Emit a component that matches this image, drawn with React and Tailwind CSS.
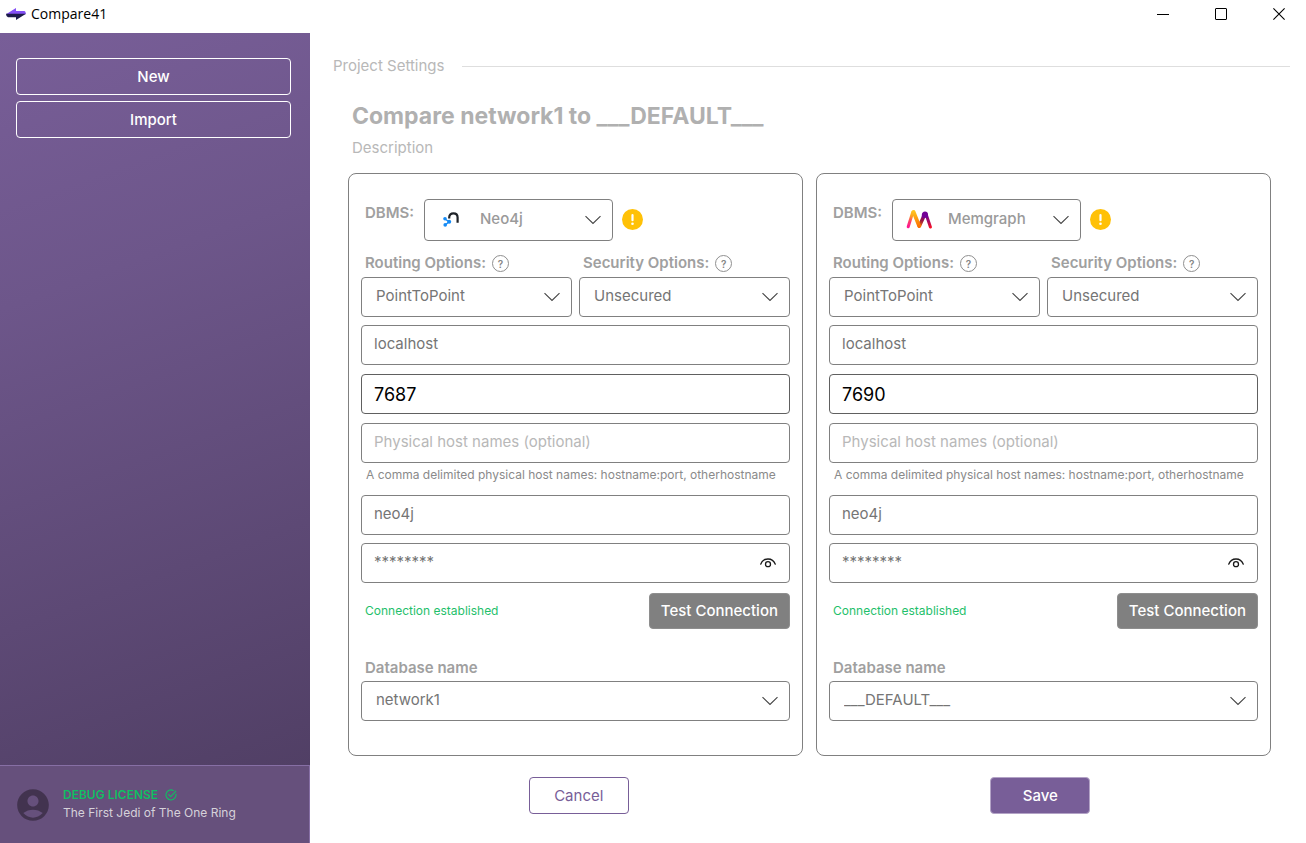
import React, { useState } from "react";
import { MdAccountCircle } from "react-icons/md";

const connections = [
  {
    id: "source",
    dbms: "Neo4j",
    Logo: Neo4jLogo,
    port: "7687",
    database: "network1",
  },
  {
    id: "target",
    dbms: "Memgraph",
    Logo: MemgraphLogo,
    port: "7690",
    database: "___DEFAULT___",
  },
];

function AppLogo() {
  return (
    <svg width="20" height="12" viewBox="0 0 20 12" aria-hidden="true">
      <path d="M0 6.2 L10 0 V3 H18.5 Q20 3.4 19.8 6.2 Z" fill="#8450f5" />
      <path d="M0 5.8 H20 L10 12 V9.2 H2 Q0 8.8 0 5.8 Z" fill="#1d1b4b" />
    </svg>
  );
}

function Neo4jLogo() {
  return (
    <svg width="16" height="15" viewBox="0 0 16 15" aria-hidden="true">
      <path
        d="M6.2 6.5 V5.6 C6.2 2.6 8 1.4 10.4 1.4 C12.9 1.4 14.6 2.8 14.6 5.6 V10.8"
        fill="none"
        stroke="#1f2328"
        strokeWidth="2.2"
      />
      <path
        d="M2 7 L6 9.8 L2.6 12.8"
        fill="none"
        stroke="#168bf5"
        strokeWidth="1.4"
      />
      <circle cx="2" cy="6.8" r="1.8" fill="#168bf5" />
      <circle cx="6.2" cy="9.8" r="2" fill="#168bf5" />
      <circle cx="2.2" cy="12.9" r="1.8" fill="#168bf5" />
    </svg>
  );
}

function MemgraphLogo() {
  return (
    <svg width="26" height="20" viewBox="0 0 26 20" aria-hidden="true">
      <defs>
        <linearGradient id="mg-left" gradientUnits="userSpaceOnUse" x1="2" y1="18" x2="7" y2="2">
          <stop offset="0" stopColor="#ff1493" />
          <stop offset="0.35" stopColor="#fb3e6a" />
          <stop offset="0.7" stopColor="#ffa51e" />
          <stop offset="1" stopColor="#ffc71e" />
        </linearGradient>
        <linearGradient id="mg-mid" gradientUnits="userSpaceOnUse" x1="8" y1="2" x2="13" y2="18">
          <stop offset="0" stopColor="#ffc71e" />
          <stop offset="1" stopColor="#fb6e00" />
        </linearGradient>
        <linearGradient id="mg-rise" gradientUnits="userSpaceOnUse" x1="18" y1="5" x2="13" y2="18">
          <stop offset="0" stopColor="#720096" />
          <stop offset="0.5" stopColor="#9a1640" />
          <stop offset="1" stopColor="#fb6e00" />
        </linearGradient>
        <linearGradient id="mg-right" gradientUnits="userSpaceOnUse" x1="20" y1="4" x2="25" y2="19">
          <stop offset="0" stopColor="#720096" />
          <stop offset="0.5" stopColor="#9d0a6a" />
          <stop offset="1" stopColor="#ff1020" />
        </linearGradient>
      </defs>
      <g strokeLinecap="round" strokeLinejoin="round" fill="none">
        <path d="M20.2 5.6 L24.4 18" stroke="url(#mg-right)" strokeWidth="3" />
        <path d="M18.6 5.6 L13.4 17" stroke="url(#mg-rise)" strokeWidth="3.6" />
        <path d="M7.6 3 L13.2 17" stroke="url(#mg-mid)" strokeWidth="3.8" />
        <path d="M6.8 3 L2.2 17.8" stroke="url(#mg-left)" strokeWidth="3" />
      </g>
      <path
        d="M15.8 8.4 V6 C15.8 3.8 17.2 2.6 19 2.6 C20.8 2.6 22 3.8 22 5.6 V9 Z"
        fill="#720096"
      />
    </svg>
  );
}

function ChevronIcon() {
  return (
    <svg
      width="16"
      height="9"
      viewBox="0 0 16 9"
      className="pointer-events-none absolute right-3 top-1/2 -translate-y-1/2"
      aria-hidden="true"
    >
      <path
        d="M0.5 0.7 L8 8 L15.5 0.7"
        fill="none"
        stroke="#444444"
        strokeWidth="1.1"
      />
    </svg>
  );
}

function HelpIcon() {
  return (
    <span className="flex h-[17px] w-[17px] items-center justify-center rounded-full border border-[#8f8f8f] text-[10px] font-semibold leading-none text-[#858585]">
      ?
    </span>
  );
}

function WarningIcon() {
  return (
    <svg width="21" height="21" viewBox="0 0 21 21" aria-hidden="true">
      <circle cx="10.5" cy="10.5" r="10.5" fill="#ffc107" />
      <path d="M10.5 6 V11.2" stroke="#ffffff" strokeWidth="2.2" strokeLinecap="round" />
      <circle cx="10.5" cy="14.8" r="1.3" fill="#ffffff" />
    </svg>
  );
}

function EyeIcon() {
  return (
    <svg width="16" height="10" viewBox="0 0 16 10" fill="none" aria-hidden="true">
      <path
        d="M0.7 6.2 C2 2.8 4.8 1 8 1 C11.2 1 14 2.8 15.3 6.2"
        stroke="#1a1a1a"
        strokeWidth="1.3"
        strokeLinecap="round"
      />
      <circle cx="8" cy="6.2" r="2.5" stroke="#1a1a1a" strokeWidth="1.3" />
    </svg>
  );
}

function CheckCircleIcon() {
  return (
    <svg width="12" height="12" viewBox="0 0 12 12" fill="none" aria-hidden="true">
      <path
        d="M10.9 5 A5 5 0 1 1 8.3 1.5"
        stroke="#0fbf62"
        strokeWidth="1.1"
        strokeLinecap="round"
      />
      <path
        d="M3.7 5.6 L5.7 7.7 L10.8 2.2"
        stroke="#0fbf62"
        strokeWidth="1.1"
        strokeLinecap="round"
        strokeLinejoin="round"
      />
    </svg>
  );
}

function TitleBar() {
  return (
    <header className="flex h-[33px] shrink-0 items-start bg-white">
      <div className="flex h-7 items-center gap-[5px] pl-[6px]">
        <AppLogo />
        <span className="font-['Open_Sans',sans-serif] text-[14px] leading-5 text-black">
          Compare41
        </span>
      </div>
      <div className="ml-auto flex gap-1">
        <button aria-label="Minimize" className="flex h-7 w-[54px] items-center justify-center">
          <span className="h-px w-3 bg-black" />
        </button>
        <button aria-label="Maximize" className="flex h-7 w-[54px] items-center justify-center">
          <span className="h-3 w-3 rounded-[1px] border border-black" />
        </button>
        <button aria-label="Close" className="flex h-7 w-[54px] items-center justify-center">
          <svg width="12" height="12" viewBox="0 0 12 12" aria-hidden="true">
            <path d="M0.4 0.4 L11.6 11.6 M11.6 0.4 L0.4 11.6" stroke="#000000" strokeWidth="1.1" />
          </svg>
        </button>
      </div>
    </header>
  );
}

function Sidebar() {
  return (
    <aside className="flex w-[310px] shrink-0 flex-col bg-[linear-gradient(160deg,#785e98_0%,#6d568a_30%,#4d3c60_100%)]">
      <nav className="flex flex-col gap-[6px] px-4 pt-[25px] pr-[19px]">
        <button className="h-[37px] rounded-[4px] border border-white pt-px text-[15px] font-medium text-white">
          New
        </button>
        <button className="h-[37px] rounded-[4px] border border-white pt-px text-[15px] font-medium text-white">
          Import
        </button>
      </nav>
      <div className="mt-auto flex h-[78px] items-center gap-[11px] border-t border-r border-[#876fa5] bg-[#66507c] pl-[14px]">
        <MdAccountCircle size={38} className="text-[#42334f]" />
        <div className="pb-[2px] text-[12px] leading-[18px]">
          <p className="flex items-center gap-[7px] font-semibold text-[#0fbf62]">
            DEBUG LICENSE <CheckCircleIcon />
          </p>
          <p className="text-[#d6d2da]">The First Jedi of The One Ring</p>
        </div>
      </div>
    </aside>
  );
}

function SelectField({ id, value, options }) {
  return (
    <div className="relative">
      <select
        id={id}
        defaultValue={value}
        className="block h-10 w-full appearance-none rounded-[4px] border border-[#808080] bg-white pb-[2px] pl-[14px] text-[15px] text-[#757575]"
      >
        {options.map((option) => (
          <option key={option}>{option}</option>
        ))}
      </select>
      <ChevronIcon />
    </div>
  );
}

function TextField({ className, ...props }) {
  return (
    <input
      type="text"
      className={`block h-10 w-full rounded-[4px] border bg-white px-3 placeholder:text-[#b8b8b8] ${className}`}
      {...props}
    />
  );
}

const fieldText = "border-[#808080] pb-1 text-[15px] text-[#757575]";

function ConnectionCard({ connection }) {
  const { id, dbms, Logo, port, database } = connection;

  return (
    <section className="rounded-[8px] border border-[#808080] bg-white px-3 pt-[25px] pb-[34px]">
      <div className="flex pl-1">
        <label
          htmlFor={`${id}-dbms`}
          className="w-[59px] pt-1 text-[15px] leading-5 font-semibold text-[#a0a0a0]"
        >
          DBMS:
        </label>
        <div className="relative w-[189px]">
          <select
            id={`${id}-dbms`}
            defaultValue={dbms}
            className="block h-[42px] w-full appearance-none rounded-[4px] border border-[#808080] bg-white pb-[2px] pl-[55px] text-[15px] font-medium text-[#9a9a9a]"
          >
            <option>Neo4j</option>
            <option>Memgraph</option>
          </select>
          <span className="pointer-events-none absolute top-0 left-[14px] flex h-10 w-[26px] items-center justify-center">
            <Logo />
          </span>
          <ChevronIcon />
        </div>
        <span className="ml-[9px] flex items-center pb-px">
          <WarningIcon />
        </span>
      </div>

      <div className="mt-3 grid grid-cols-2 gap-x-[7px]">
        <div>
          <div className="flex h-6 items-center gap-[6px] pb-[3px] pl-1">
            <label htmlFor={`${id}-routing`} className="text-[15px] font-semibold text-[#a0a0a0]">
              Routing Options:
            </label>
            <HelpIcon />
          </div>
          <SelectField
            id={`${id}-routing`}
            value="PointToPoint"
            options={["PointToPoint", "ClientSide", "ServerSide"]}
          />
        </div>
        <div>
          <div className="flex h-6 items-center gap-[6px] pb-[3px] pl-1">
            <label htmlFor={`${id}-security`} className="text-[15px] font-semibold text-[#a0a0a0]">
              Security Options:
            </label>
            <HelpIcon />
          </div>
          <SelectField
            id={`${id}-security`}
            value="Unsecured"
            options={["Unsecured", "Secured"]}
          />
        </div>
      </div>

      <div className="mt-2 flex flex-col gap-[9px]">
        <TextField aria-label="Host" defaultValue="localhost" className={fieldText} />
        <TextField
          aria-label="Port"
          defaultValue={port}
          className="border-[#606060] text-[18px] text-black"
        />
        <TextField
          aria-label="Physical host names"
          aria-describedby={`${id}-hosts-help`}
          placeholder="Physical host names (optional)"
          className={fieldText}
        />
      </div>
      <p id={`${id}-hosts-help`} className="pl-[5px] text-[12px] leading-6 text-[#8a8a8a]">
        A comma delimited physical host names: hostname:port, otherhostname
      </p>

      <div className="mt-2 flex flex-col gap-2">
        <TextField aria-label="User" defaultValue="neo4j" className={fieldText} />
        <div className="relative">
          <TextField aria-label="Password" defaultValue="********" className={fieldText} />
          <button
            aria-label="Show password"
            className="absolute inset-y-0 right-[14px] flex items-center"
          >
            <EyeIcon />
          </button>
        </div>
      </div>

      <div className="mt-[10px] flex items-center justify-between pl-1">
        <span className="text-[12px] text-[#1fbf6b]">Connection established</span>
        <button className="h-9 rounded-[4px] border border-[#8e8e8e] bg-[#808080] px-[11px] text-[15px] font-medium text-white">
          Test Connection
        </button>
      </div>

      <div className="mt-[29px]">
        <label
          htmlFor={`${id}-database`}
          className="block pb-[3px] pl-1 text-[15px] leading-5 font-semibold text-[#a0a0a0]"
        >
          Database name
        </label>
        <SelectField id={`${id}-database`} value={database} options={[database]} />
      </div>
    </section>
  );
}

function App() {
  const [description, setDescription] = useState("");

  return (
    <div className="flex min-h-screen flex-col bg-white font-[Inter,sans-serif]">
      <TitleBar />
      <div className="flex flex-1">
        <Sidebar />
        <main className="min-w-0 flex-1 pt-[22px]">
          <div className="flex items-center gap-[18px] pr-4 pl-[23px]">
            <h2 className="text-[15px] leading-[22px] text-[#b8b8b8]">Project Settings</h2>
            <span className="h-px flex-1 bg-[#dedede]" />
          </div>
          <div className="pr-[35px] pl-[38px]">
            <div className="pt-6 pl-1">
              <h1 className="text-[23px] leading-[30px] font-bold text-[#b0b0b0]">
                Compare network1 to ___DEFAULT___
              </h1>
              <input
                type="text"
                aria-label="Description"
                placeholder="Description"
                value={description}
                onChange={(e) => setDescription(e.target.value)}
                className="mt-1 block h-6 w-full text-[15px] placeholder:text-[#b8b8b8]"
              />
            </div>
            <div className="mt-[14px] grid grid-cols-2 gap-[13px]">
              {connections.map((connection) => (
                <ConnectionCard key={connection.id} connection={connection} />
              ))}
            </div>
            <div className="mt-[21px] grid grid-cols-2 justify-items-center pb-6">
              <button className="h-[37px] w-[100px] rounded-[4px] border border-[#785e98] bg-white pt-px text-[15px] text-[#785e98]">
                Cancel
              </button>
              <button className="h-[37px] w-[100px] rounded-[4px] border border-[#b3a3c6] bg-[#785e98] pt-px text-[15px] font-medium text-white">
                Save
              </button>
            </div>
          </div>
        </main>
      </div>
    </div>
  );
}

export default App;
